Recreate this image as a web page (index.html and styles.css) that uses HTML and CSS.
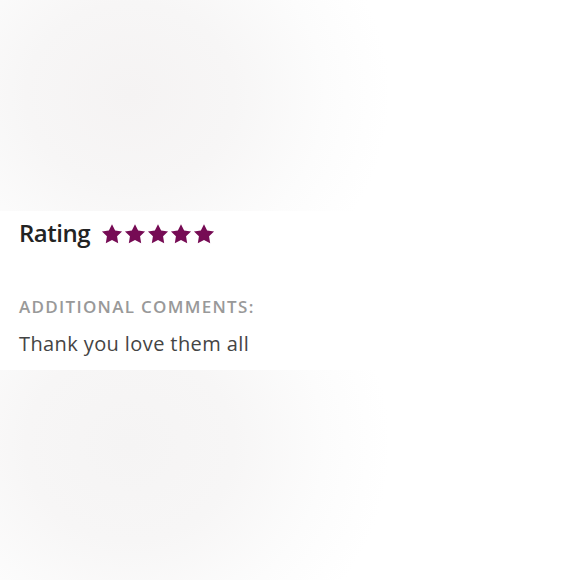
FILE: index.html
```html
<!DOCTYPE html>
<html>
<head>
<meta charset="utf-8">
<link rel="stylesheet" href="styles.css">
</head>
<body>
<div class="page">
  <div class="blur blur-top"></div>
  <section class="review">
    <div class="rating-row">
      <span class="rating-label">Rating</span>
      <span class="stars">
        <svg class="star" viewBox="0 0 24 24"><path d="M12 1.3L15.41 8.11L22.94 9.25L17.52 14.59L18.76 22.1L12 18.6L5.24 22.1L6.48 14.59L1.06 9.25L8.59 8.11Z"/></svg>
        <svg class="star" viewBox="0 0 24 24"><path d="M12 1.3L15.41 8.11L22.94 9.25L17.52 14.59L18.76 22.1L12 18.6L5.24 22.1L6.48 14.59L1.06 9.25L8.59 8.11Z"/></svg>
        <svg class="star" viewBox="0 0 24 24"><path d="M12 1.3L15.41 8.11L22.94 9.25L17.52 14.59L18.76 22.1L12 18.6L5.24 22.1L6.48 14.59L1.06 9.25L8.59 8.11Z"/></svg>
        <svg class="star" viewBox="0 0 24 24"><path d="M12 1.3L15.41 8.11L22.94 9.25L17.52 14.59L18.76 22.1L12 18.6L5.24 22.1L6.48 14.59L1.06 9.25L8.59 8.11Z"/></svg>
        <svg class="star" viewBox="0 0 24 24"><path d="M12 1.3L15.41 8.11L22.94 9.25L17.52 14.59L18.76 22.1L12 18.6L5.24 22.1L6.48 14.59L1.06 9.25L8.59 8.11Z"/></svg>
      </span>
    </div>
    <div class="comments-label">ADDITIONAL COMMENTS:</div>
    <p class="comment">Thank you love them all</p>
  </section>
  <div class="blur blur-bottom"></div>
</div>
</body>
</html>
```
FILE: styles.css
```css
html, body {
  margin: 0;
  padding: 0;
  background: #ffffff;
}

.page {
  width: 580px;
  height: 580px;
  display: flex;
  flex-direction: column;
  font-family: "Open Sans", "Liberation Sans", sans-serif;
}

.blur {
  flex: none;
}

.blur-top {
  height: 211px;
  background: radial-gradient(ellipse 260px 230px at 130px 95px, #f5f3f3 0%, #f7f6f6 40%, #fcfcfc 75%, #ffffff 100%);
}

.blur-bottom {
  flex: 1;
  background: radial-gradient(ellipse 260px 240px at 130px 75px, #f5f4f4 0%, #f7f6f6 40%, #fcfcfc 75%, #ffffff 100%);
}

.review {
  height: 159px;
  box-sizing: border-box;
  padding: 3px 19px 0;
  background: #ffffff;
}

.rating-row {
  display: flex;
  align-items: center;
  height: 36px;
}

.rating-label {
  font-size: 24px;
  font-weight: 600;
  color: #232323;
  letter-spacing: -0.5px;
}

.stars {
  display: flex;
  gap: 1px;
  margin-left: 11px;
  margin-top: 3px;
}

.star {
  width: 22px;
  height: 22px;
  fill: #760b54;
}

.comments-label {
  margin-top: 46px;
  font-size: 17px;
  font-weight: 600;
  color: #999999;
  letter-spacing: 1.3px;
  line-height: 22px;
}

.comment {
  margin: 14px 0 0;
  font-size: 20px;
  color: #444444;
  letter-spacing: 0.4px;
  line-height: 24px;
}
```
